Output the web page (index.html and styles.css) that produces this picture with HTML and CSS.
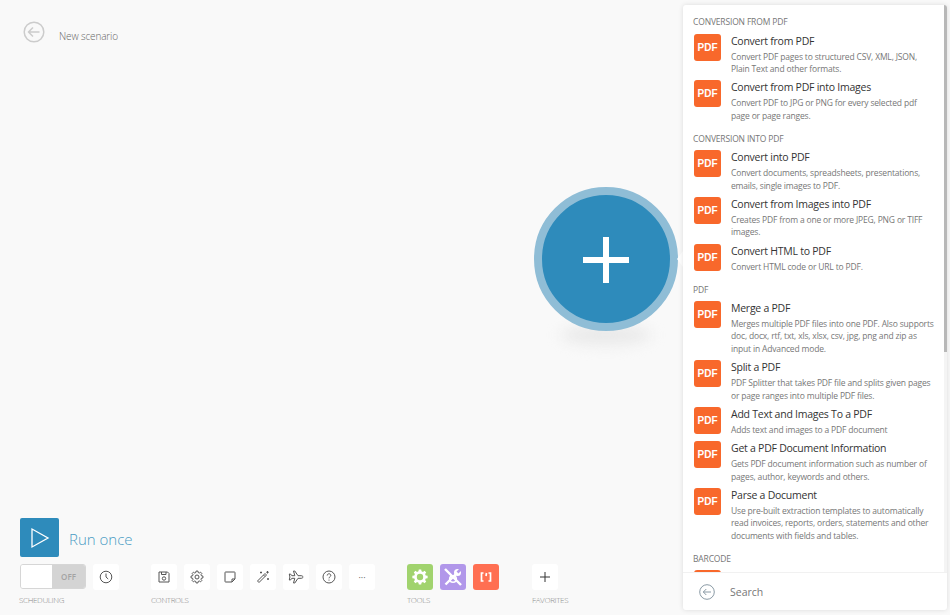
FILE: index.html
```html
<!DOCTYPE html>
<html lang="en">
<head>
    <meta charset="UTF-8">
    <title>New scenario</title>
    <link rel="stylesheet" href="styles.css">
</head>
<body>

<div class="editor">
    <header class="top">
        <svg class="back" width="22" height="22" viewBox="0 0 22 22"><circle cx="11" cy="11" r="9.8"/><path d="M16.5 11H5.5M10 6.5 5.5 11l4.500 4.500"/></svg>
        <span class="scenario-name">New scenario</span>
    </header>

    <div class="run">
        <button class="run-btn"><svg width="20" height="22" viewBox="0 0 20 22"><path d="M2 2v18l16-9z"/></svg></button>
        <span class="run-label">Run once</span>
    </div>

    <div class="toolbar">
        <div class="group group-scheduling">
            <div class="tools">
                <div class="toggle"><span class="toggle-on"></span><span class="toggle-off">OFF</span></div>
                <div class="tool"><svg width="14" height="14" viewBox="0 0 14 14"><circle cx="7" cy="7" r="5.8"/><path d="M7 3.500V7l2.200 2"/></svg></div>
            </div>
            <span class="group-label">SCHEDULING</span>
        </div>
        <div class="group group-controls">
            <div class="tools">
                <div class="tool"><svg width="14" height="14" viewBox="0 0 14 14"><path d="M2 2h8.500L12 3.500V12H2z"/><path d="M4.500 2v2.500h4.500V2"/><circle cx="7" cy="8.500" r="1.700"/></svg></div>
                <div class="tool"><svg width="14" height="14" viewBox="0 0 14 14"><path d="M6.060 1.070H7.940L8.190 2.560 9.300 3.020 10.530 2.150 11.850 3.470 10.980 4.700 11.440 5.810 12.930 6.060V7.940L11.440 8.190 10.980 9.300 11.850 10.530 10.530 11.850 9.300 10.980 8.190 11.440 7.940 12.930H6.060L5.810 11.440 4.700 10.980 3.470 11.850 2.150 10.530 3.020 9.300 2.560 8.190 1.070 7.940V6.060L2.560 5.810 3.020 4.700 2.150 3.470 3.470 2.150 4.700 3.020 5.810 2.560z"/><circle cx="7" cy="7" r="2"/></svg></div>
                <div class="tool"><svg width="14" height="14" viewBox="0 0 14 14"><path d="M2.500 2h9a.5.5 0 0 1 .5.500V9l-3 3H2.500a.5.5 0 0 1-.5-.5v-9a.5.5 0 0 1 .5-.5z"/><path d="M12 9H9v3"/></svg></div>
                <div class="tool"><svg width="14" height="14" viewBox="0 0 14 14"><path d="M1.500 11 9 3.500l1.500 1.500L3 12.500z"/><path d="M7.500 5l1.500 1.500M11.500 1v2.500M10.250 2.250h2.500M5 1.500v2M4 2.500h2M12 8v2M11 9h2"/></svg></div>
                <div class="tool"><svg width="16" height="14" viewBox="0 0 16 14"><path d="M15 7c0-.8-1-1.300-2-1.300H10L6.800 1H5.500l1.300 4.700H3.800L2.500 4H1.300l.6 3-.6 3h1.200l1.300-1.700h3l-1.300 4.700h1.300L10 8.300h3c1 0 2-.5 2-1.300z"/></svg></div>
                <div class="tool"><svg width="14" height="14" viewBox="0 0 14 14"><circle cx="7" cy="7" r="6"/><path d="M5.200 5.500C5.200 4.400 6 3.800 7 3.800s1.800.6 1.800 1.600C8.800 6.800 7 6.800 7 8.300M7 9.600v1"/></svg></div>
                <div class="tool tool-more">···</div>
            </div>
            <span class="group-label">CONTROLS</span>
        </div>
        <div class="group group-tools">
            <div class="tools">
                <div class="tool green"><svg class="solid" width="18" height="18" viewBox="0 0 14 14"><path d="M6.060 1.070H7.940L8.190 2.560 9.300 3.020 10.530 2.150 11.850 3.470 10.980 4.700 11.440 5.810 12.930 6.060V7.940L11.440 8.190 10.980 9.300 11.850 10.530 10.530 11.850 9.300 10.980 8.190 11.440 7.940 12.930H6.060L5.810 11.440 4.700 10.980 3.470 11.850 2.150 10.530 3.020 9.300 2.560 8.190 1.070 7.940V6.060L2.560 5.810 3.020 4.700 2.150 3.470 3.470 2.150 4.700 3.020 5.810 2.560z"/><circle class="hole-green" cx="7" cy="7" r="2.500"/></svg></div>
                <div class="tool purple"><svg class="lines" width="22" height="22" viewBox="0 0 22 22"><path d="M3 3l16 16"/><path d="M3.500 18.500 14 8"/><circle cx="11" cy="13" r="3.300" class="thin"/><circle cx="15.500" cy="6.500" r="3.500" class="head"/><path class="notch" d="M15.500 6.500 20 2"/></svg></div>
                <div class="tool red"><svg class="lines bracket" width="14" height="14" viewBox="0 0 14 14"><path d="M4.500 3H2.500v8h2M9.500 3h2v8h-2M7.500 3 7 6"/></svg></div>
            </div>
            <span class="group-label">TOOLS</span>
        </div>
        <div class="group group-favorites">
            <div class="tools">
                <div class="tool tool-plus"><svg width="12" height="12" viewBox="0 0 12 12"><path d="M6 1v10M1 6h10"/></svg></div>
            </div>
            <span class="group-label">FAVORITES</span>
        </div>
    </div>
</div>

<!-- the module on the canvas -->
<div class="node-shadow"></div>
<div class="node"><span class="plus"></span></div>
<div class="panel-arrow"></div>

<aside class="panel">
    <div class="list">
        <h4>CONVERSION FROM PDF</h4>
        <div class="item"><span class="pdf">PDF</span><div class="item-text"><h3>Convert from PDF</h3><p>Convert PDF pages to structured CSV, XML, JSON, Plain Text and other formats.</p></div></div>
        <div class="item"><span class="pdf">PDF</span><div class="item-text"><h3>Convert from PDF into Images</h3><p>Convert PDF to JPG or PNG for every selected pdf page or page ranges.</p></div></div>

        <h4>CONVERSION INTO PDF</h4>
        <div class="item"><span class="pdf">PDF</span><div class="item-text"><h3>Convert into PDF</h3><p>Convert documents, spreadsheets, presentations, emails, single images to PDF.</p></div></div>
        <div class="item"><span class="pdf">PDF</span><div class="item-text"><h3>Convert from Images into PDF</h3><p>Creates PDF from a one or more JPEG, PNG or TIFF images.</p></div></div>
        <div class="item"><span class="pdf">PDF</span><div class="item-text"><h3>Convert HTML to PDF</h3><p>Convert HTML code or URL to PDF.</p></div></div>

        <h4>PDF</h4>
        <div class="item"><span class="pdf">PDF</span><div class="item-text"><h3>Merge a PDF</h3><p>Merges multiple PDF files into one PDF. Also supports doc, docx, rtf, txt, xls, xlsx, csv, jpg, png and zip as input in Advanced mode.</p></div></div>
        <div class="item"><span class="pdf">PDF</span><div class="item-text"><h3>Split a PDF</h3><p>PDF Splitter that takes PDF file and splits given pages or page ranges into multiple PDF files.</p></div></div>
        <div class="item"><span class="pdf">PDF</span><div class="item-text"><h3>Add Text and Images To a PDF</h3><p>Adds text and images to a PDF document</p></div></div>
        <div class="item"><span class="pdf">PDF</span><div class="item-text"><h3>Get a PDF Document Information</h3><p>Gets PDF document information such as number of pages, author, keywords and others.</p></div></div>
        <div class="item"><span class="pdf">PDF</span><div class="item-text"><h3>Parse a Document</h3><p>Use pre-built extraction templates to automatically read invoices, reports, orders, statements and other documents with fields and tables.</p></div></div>

        <h4>BARCODE</h4>
        <div class="item"><span class="pdf"></span></div>
        <span class="scrollbar"></span>
    </div>
    <div class="search">
        <svg width="16" height="16" viewBox="0 0 16 16"><circle cx="8" cy="8" r="7.300"/><path d="M12 8H4.300M7.300 5 4.300 8l3 3"/></svg>
        <span>Search</span>
    </div>
</aside>

</body>
</html>
```

FILE: styles.css
```css
html, body {
    height: 100%;
}
body {
    margin: 0;
    background: #f9f9f9;
    font-family: 'Open Sans', sans-serif;
    color: #333;
    overflow: hidden;
}
svg {
    display: block;
    fill: none;
    stroke: #555;
    stroke-width: 1;
}

/* left column */
.editor {
    height: 615px;
    width: 683px;
    box-sizing: border-box;
    padding: 21px 0 0 20px;
    display: flex;
    flex-direction: column;
}
.top {
    display: flex;
    align-items: flex-start;
    align-self: flex-start;
    padding-left: 3px;
    gap: 14px;
    flex: 1;
}
.back {
    stroke: #ccc;
    stroke-width: 1.5;
}
.scenario-name {
    font-size: 10px;
    font-weight: 300;
    color: #666;
    line-height: 14px;
    padding-top: 8px;
    letter-spacing: -0.15px;
}
.run {
    display: flex;
    align-items: center;
    gap: 10px;
}
.run-btn {
    width: 39px;
    height: 39px;
    padding: 0;
    border: none;
    border-radius: 2px;
    background: #2e8bbb;
    display: flex;
    align-items: center;
    justify-content: center;
}
.run-btn svg {
    stroke: #fff;
    stroke-width: 1.3;
    margin-left: 1px;
}
.run-label {
    font-size: 15px;
    font-weight: 300;
    color: #4a9cc4;
    padding-top: 2px;
}

/* bottom toolbar */
.toolbar {
    display: flex;
    padding: 7px 0 10px;
}
.group {
    display: flex;
    flex-direction: column;
    gap: 4px;
}
.group-scheduling {
    width: 131px;
}
.group-controls {
    width: 256px;
}
.group-tools {
    width: 125px;
}
.tools {
    display: flex;
    gap: 7px;
}
.tool {
    width: 26px;
    height: 26px;
    border-radius: 3px;
    background: #fff;
    display: flex;
    align-items: center;
    justify-content: center;
}
.tool-more {
    font-size: 9px;
    color: #555;
}
.tool-plus svg {
    stroke: #333;
}
.green {
    background: #a1d36e;
}
.purple {
    background: #b197ea;
}
.red {
    background: #ff6f52;
}
svg.solid {
    fill: #fff;
    stroke: none;
}
.hole-green {
    fill: #a1d36e;
}
svg.lines {
    stroke: #fff;
    stroke-width: 2.4;
}
svg.lines .thin {
    stroke-width: 1.6;
}
svg.lines .head {
    fill: #fff;
    stroke: none;
}
svg.lines .notch {
    stroke: #b197ea;
    stroke-width: 2.6;
}
svg.bracket {
    stroke-width: 1.7;
}
.toggle {
    width: 66px;
    height: 25px;
    box-sizing: border-box;
    border: 1px solid #d6d6d6;
    border-radius: 3px;
    display: flex;
    overflow: hidden;
}
.toggle-on {
    width: 31px;
    background: #fff;
}
.toggle-off {
    flex: 1;
    background: #d4d4d4;
    color: #a3a3a3;
    font-size: 8px;
    font-weight: 600;
    line-height: 23px;
    text-align: center;
}
.group-label {
    font-size: 8px;
    font-weight: 300;
    line-height: 11px;
    letter-spacing: -0.35px;
    color: #8a8a8a;
}
.group-scheduling .group-label {
    margin-left: -1px;
}

/* plus module */
.node {
    position: absolute;
    left: 534px;
    top: 187px;
    width: 128px;
    height: 128px;
    border: 8px solid #8fbdd6;
    border-radius: 50%;
    background: #2e8bbb;
}
.plus {
    position: absolute;
    left: 41px;
    top: 62px;
    width: 46px;
    height: 6px;
    background: #fff;
}
.plus::after {
    content: "";
    position: absolute;
    left: 20px;
    top: -20px;
    width: 6px;
    height: 46px;
    background: #fff;
}
.node-shadow {
    position: absolute;
    left: 561px;
    top: 325px;
    width: 90px;
    height: 20px;
    border-radius: 50%;
    background: #e9e9e9;
    filter: blur(7px);
}
.panel-arrow {
    position: absolute;
    left: 677px;
    top: 251px;
    border-style: solid;
    border-width: 8px 6px 8px 0;
    border-color: transparent #fff transparent transparent;
}

/* right panel */
.panel {
    position: absolute;
    left: 683px;
    top: 5px;
    width: 264px;
    height: 605px;
    background: #fff;
    border-radius: 3px;
    box-shadow: 0 0 5px rgba(0, 0, 0, 0.12);
    display: flex;
    flex-direction: column;
    overflow: hidden;
}
.list {
    position: relative;
    flex: 1;
    overflow: hidden;
    padding: 0 13px 0 11px;
}
.scrollbar {
    position: absolute;
    right: 0;
    top: 0;
    width: 3px;
    height: 100%;
    background: linear-gradient(#b8b8b8 347px, #f4f4f4 347px);
}
h4 {
    margin: 0 0 0 -1px;
    padding: 6px 0 5px;
    font-size: 8.5px;
    font-weight: 400;
    line-height: 12px;
    letter-spacing: -0.16px;
    color: #777;
}
.list h4:first-child {
    padding-top: 10.5px;
    padding-bottom: 6px;
}
.item {
    display: flex;
    gap: 10px;
    padding-bottom: 4.75px;
}
.item-text {
    flex: 1;
}
.pdf {
    flex: none;
    width: 27px;
    height: 27px;
    border-radius: 3px;
    background: #f8682b;
    color: #fff;
    font-family: 'Liberation Sans', sans-serif;
    font-size: 10px;
    font-weight: 700;
    line-height: 27px;
    text-align: center;
}
h3 {
    margin: 0;
    font-size: 10.5px;
    font-weight: 400;
    line-height: 15px;
    letter-spacing: -0.25px;
    color: #333;
}
p {
    margin: 2px 0 0;
    font-size: 8.5px;
    line-height: 12.5px;
    letter-spacing: -0.17px;
    color: #777;
}
.search {
    flex: none;
    height: 37px;
    border-top: 1px solid #f1f1f1;
    display: flex;
    align-items: center;
    gap: 15px;
    padding-left: 16px;
    font-size: 10.5px;
    color: #777;
}
.search svg {
    stroke: #8a9aa5;
}
```
